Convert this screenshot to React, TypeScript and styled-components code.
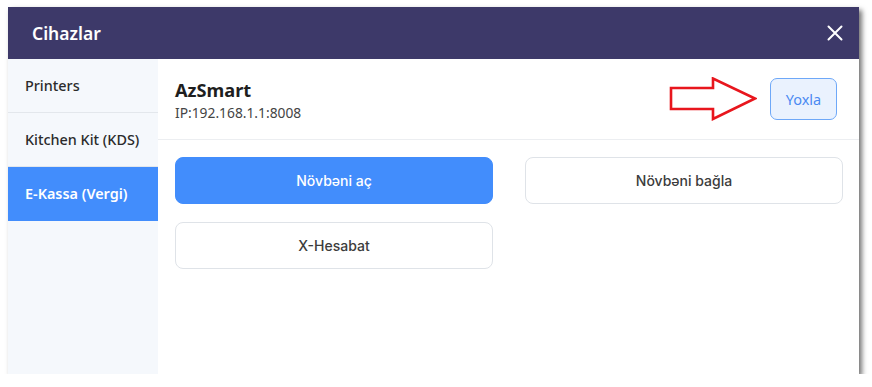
import React, { useState } from 'react';
import styled, { createGlobalStyle } from 'styled-components';

const GlobalStyle = createGlobalStyle`
  html, body {
    margin: 0;
    padding: 0;
    background: #ffffff;
  }
  body {
    font-family: 'Noto Sans', 'Open Sans', sans-serif;
  }
`;

const Page = styled.div`
  padding: 7px 0 0 8px;
`;

const Modal = styled.div`
  width: 851px;
  height: 367px;
  display: flex;
  flex-direction: column;
  background: #ffffff;
  box-shadow: 3px 3px 5px rgba(0, 0, 0, 0.55);
  overflow: hidden;
`;

const Header = styled.div`
  height: 52px;
  flex-shrink: 0;
  display: flex;
  align-items: center;
  justify-content: space-between;
  padding: 0 12px 0 24px;
  background: #3d3969;
  color: #ffffff;
`;

const Title = styled.div`
  font-size: 17.5px;
  font-weight: 600;
`;

const CloseButton = styled.button`
  display: flex;
  align-items: center;
  justify-content: center;
  width: 24px;
  height: 24px;
  padding: 0;
  border: none;
  background: transparent;
  cursor: pointer;
`;

const Body = styled.div`
  flex: 1;
  display: flex;
  min-height: 0;
`;

const Sidebar = styled.div`
  width: 150px;
  flex-shrink: 0;
  display: flex;
  flex-direction: column;
  background: #f5f8fc;
`;

const SideItem = styled.div<{ active?: boolean }>`
  height: 53px;
  display: flex;
  align-items: center;
  padding: 0 17px;
  font-size: 14.4px;
  font-weight: ${(p) => (p.active ? 600 : 500)};
  color: ${(p) => (p.active ? '#ffffff' : '#2b2b2b')};
  background: ${(p) => (p.active ? '#428dfc' : 'transparent')};
  border-bottom: 1px solid ${(p) => (p.active ? '#428dfc' : '#e3e7ec')};
  cursor: pointer;
`;

const Content = styled.div`
  flex: 1;
  display: flex;
  flex-direction: column;
`;

const DeviceBar = styled.div`
  height: 80px;
  display: flex;
  align-items: center;
  justify-content: space-between;
  padding: 0 23px 0 17px;
  border-bottom: 1px solid #eceef1;
`;

const DeviceInfo = styled.div`
  display: flex;
  flex-direction: column;
  gap: 1px;
  margin-top: 2px;
`;

const DeviceName = styled.div`
  font-size: 18.2px;
  font-weight: 700;
  color: #1e1e1e;
`;

const DeviceIp = styled.div`
  font-size: 13.8px;
  color: #444444;
`;

const CheckArea = styled.div`
  display: flex;
  align-items: center;
  gap: 13px;
`;

const CheckButton = styled.button`
  width: 67px;
  height: 42px;
  border: 1px solid #6ea8f8;
  border-radius: 7px;
  background: #eaf2fe;
  color: #4b8af2;
  font-family: 'Noto Sans', sans-serif;
  font-size: 14.5px;
  cursor: pointer;
`;

const Actions = styled.div`
  display: grid;
  grid-template-columns: 318px 318px;
  column-gap: 32px;
  row-gap: 18px;
  padding: 17px 17px 0 17px;
`;

const ActionButton = styled.button<{ primary?: boolean }>`
  height: 47px;
  border-radius: 8px;
  border: 1px solid ${(p) => (p.primary ? '#428dfc' : '#dfe3e8')};
  background: ${(p) => (p.primary ? '#428dfc' : '#ffffff')};
  color: ${(p) => (p.primary ? '#ffffff' : '#3c3c3c')};
  font-family: 'Inter', sans-serif;
  font-size: 14px;
  font-weight: ${(p) => (p.primary ? 500 : 450)};
  cursor: pointer;
`;

const ArrowMark = () => (
  <svg width="88" height="44" viewBox="0 0 88 44">
    <path
      d="M2 11 L44 11 L44 1.5 L86 21.5 L44 42 L44 32 L2 32 Z"
      fill="none"
      stroke="#e8161d"
      strokeWidth="2.6"
      strokeLinejoin="miter"
    />
  </svg>
);

const tabs = ['Printers', 'Kitchen Kit (KDS)', 'E-Kassa (Vergi)'];

const App = () => {
  const [tab, setTab] = useState(2);

  return (
    <Page>
      <GlobalStyle />
      <Modal>
        <Header>
          <Title>Cihazlar</Title>
          <CloseButton>
            <svg width="16" height="16" viewBox="0 0 16 16">
              <path d="M1.5 1.5 L14.5 14.5 M14.5 1.5 L1.5 14.5" stroke="#ffffff" strokeWidth="2" strokeLinecap="round" />
            </svg>
          </CloseButton>
        </Header>
        <Body>
          <Sidebar>
            {tabs.map((t, i) => (
              <SideItem key={t} active={i === tab} onClick={() => setTab(i)}>
                {t}
              </SideItem>
            ))}
          </Sidebar>
          <Content>
            <DeviceBar>
              <DeviceInfo>
                <DeviceName>AzSmart</DeviceName>
                <DeviceIp>IP:192.168.1.1:8008</DeviceIp>
              </DeviceInfo>
              <CheckArea>
                <ArrowMark />
                <CheckButton>Yoxla</CheckButton>
              </CheckArea>
            </DeviceBar>
            <Actions>
              <ActionButton primary>Növbəni aç</ActionButton>
              <ActionButton>Növbəni bağla</ActionButton>
              <ActionButton>X-Hesabat</ActionButton>
            </Actions>
          </Content>
        </Body>
      </Modal>
    </Page>
  );
};

export default App;
